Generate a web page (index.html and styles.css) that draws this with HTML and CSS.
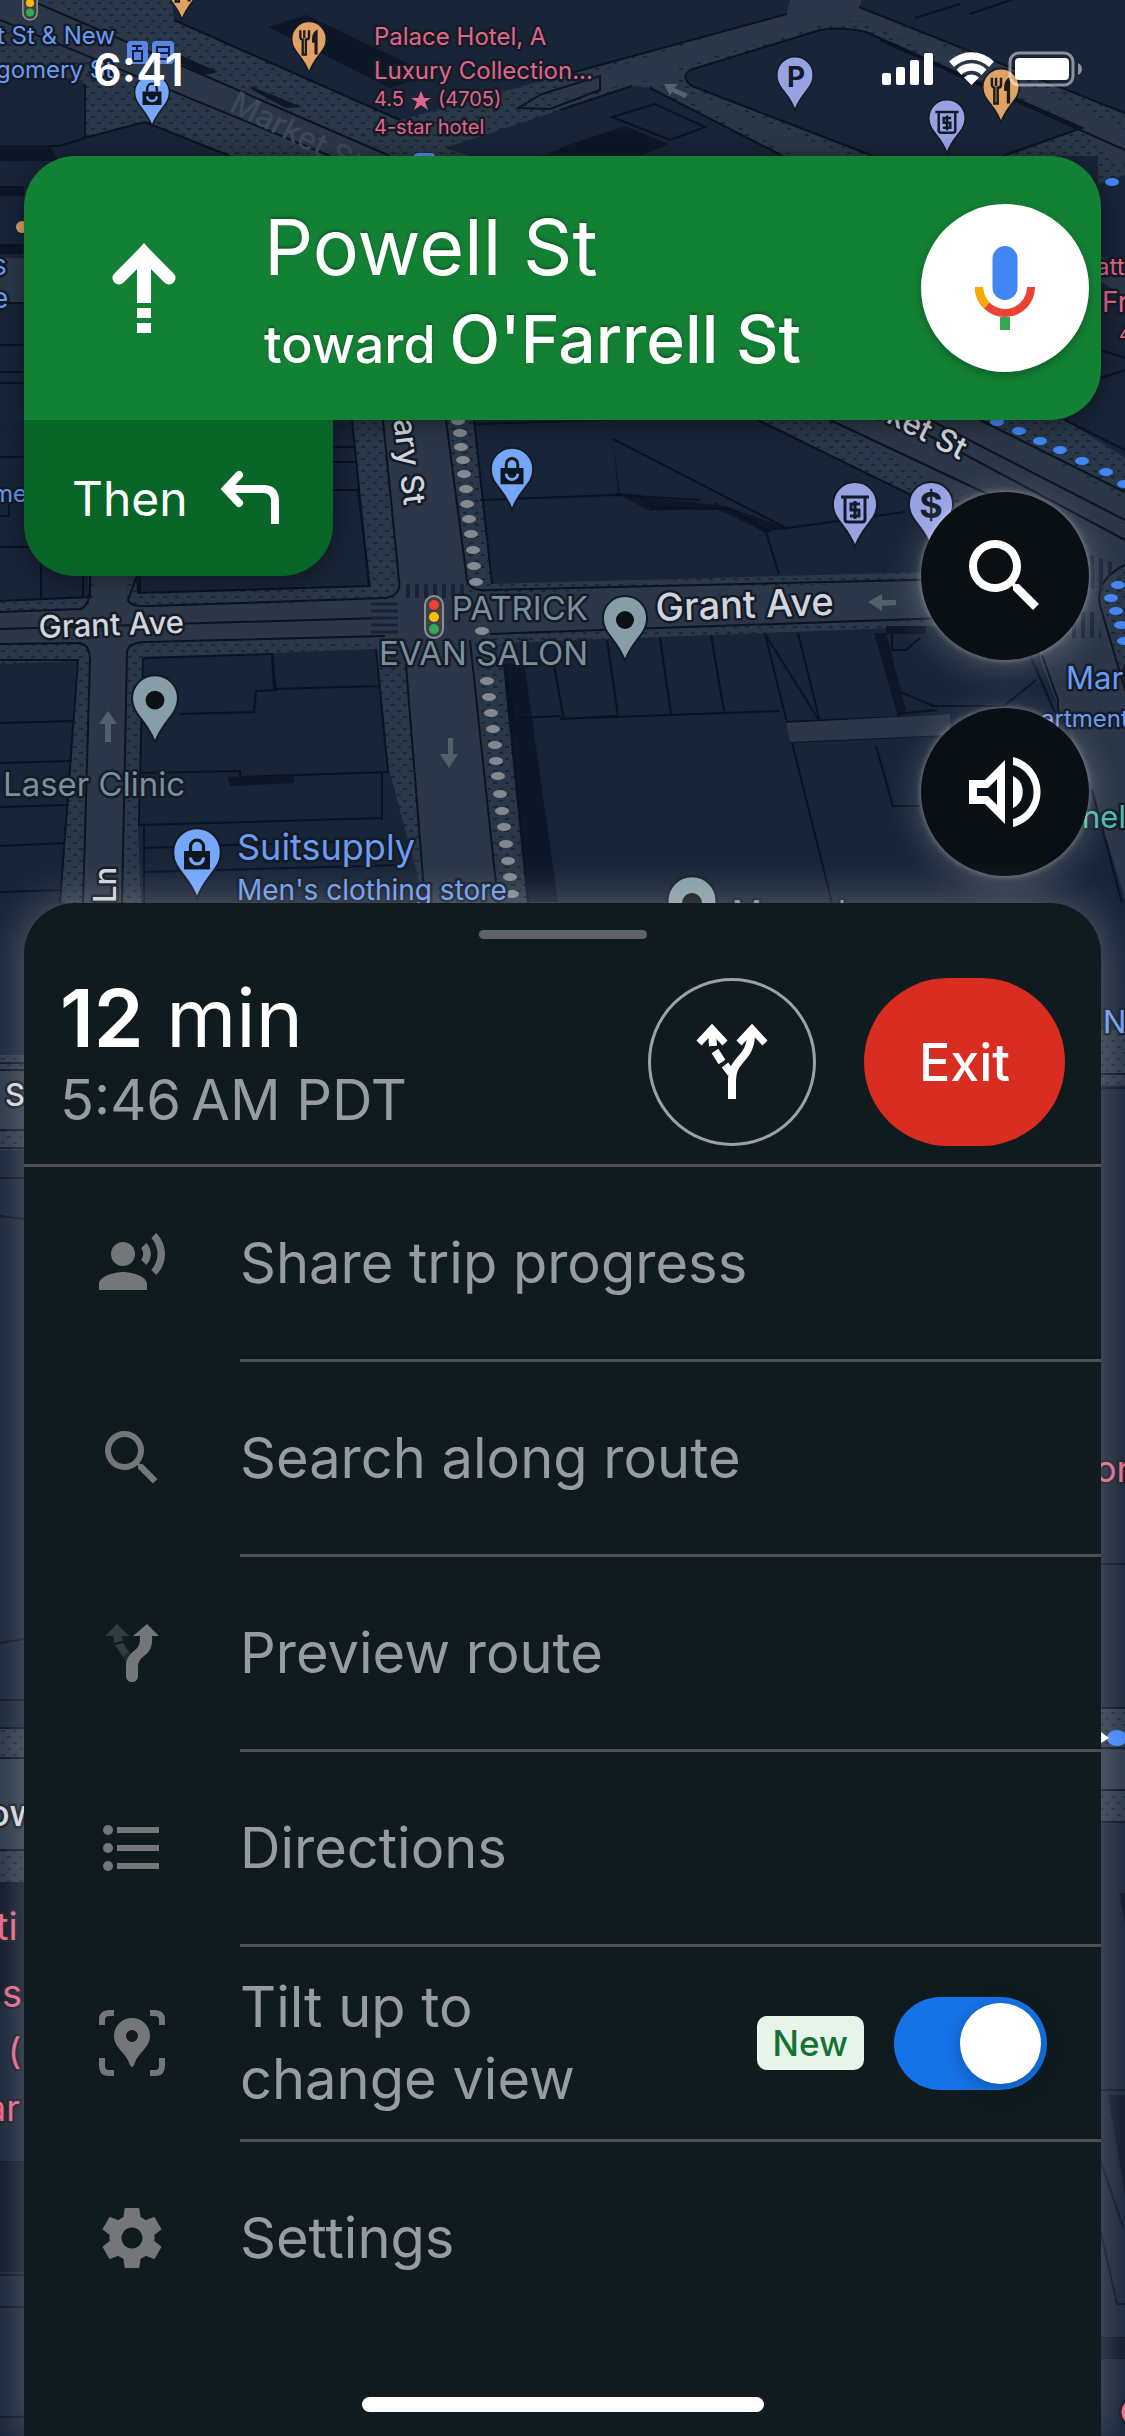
FILE: index.html
```html
<!DOCTYPE html>
<html lang="en">
<head>
  <meta charset="UTF-8" />
  <meta name="viewport" content="width=device-width, initial-scale=1.0"/>
  <title>Navigation</title>
  <link rel="stylesheet" href="styles.css">
</head>
<body>

  <!-- MAP -->
  <svg class="map" viewBox="0 0 1125 2436" preserveAspectRatio="xMidYMin slice" aria-hidden="true">
    <defs>
      <pattern id="walk" width="12" height="12" patternUnits="userSpaceOnUse">
        <rect width="12" height="12" fill="#2a3748"/>
        <path d="M1 3h4M7 9h4" stroke="#1a2638" stroke-width="2"/>
      </pattern>
      <pattern id="stripes" width="7" height="7" patternUnits="userSpaceOnUse">
        <path d="M0 2h7" stroke="#172335" stroke-width="3"/>
      </pattern>
      <pattern id="stripesV" width="9" height="9" patternUnits="userSpaceOnUse">
        <path d="M3 0v9" stroke="#172335" stroke-width="4"/>
      </pattern>
      <marker id="greyDot" markerUnits="userSpaceOnUse" markerWidth="16" markerHeight="10" refX="8" refY="5">
        <ellipse cx="8" cy="5" rx="7" ry="4" fill="#84888f"/>
      </marker>
      <marker id="blueDot" markerUnits="userSpaceOnUse" markerWidth="16" markerHeight="10" refX="8" refY="5">
        <ellipse cx="8" cy="5" rx="7" ry="4" fill="#4285f4"/>
      </marker>
      <symbol id="pin" viewBox="0 0 48 70">
        <path d="M24 2a22 22 0 0 1 22 23c0 15-15 21-22 42c-7-21-22-27-22-42a22 22 0 0 1 22-23z" fill="currentColor" stroke="#141a24" stroke-width="2"/>
      </symbol>
      <symbol id="bag" viewBox="0 0 48 70">
        <use href="#pin" width="48" height="70"/>
        <path d="M12 23h24v17H12z" fill="#10161f"/>
        <path d="M18 23v-4a6 6 0 0 1 12 0v4" fill="none" stroke="#10161f" stroke-width="3"/>
        <path d="M18 29a6 6 0 0 0 12 0" fill="none" stroke="currentColor" stroke-width="3"/>
      </symbol>
      <symbol id="food" viewBox="0 0 48 70">
        <use href="#pin" width="48" height="70"/>
        <path d="M13 13v8c0 3 2 4 3 4v19h4V25c2 0 4-1 4-4v-8M18 13v10" fill="none" stroke="#1c1a1a" stroke-width="3"/>
        <path d="M35 12c-5 2-8 7-7 17h3v15h4z" fill="#1c1a1a"/>
      </symbol>
      <symbol id="atm" viewBox="0 0 48 70">
        <use href="#pin" width="48" height="70"/>
        <path d="M10 17h28M14 17v22q0 3 3 3h14q3 0 3-3V17M29 24h-9v6h8v6h-9M24 21v18" fill="none" stroke="#141a28" stroke-width="3"/>
      </symbol>
      <symbol id="dot" viewBox="0 0 48 70">
        <use href="#pin" width="48" height="70"/>
        <circle cx="24" cy="26" r="9" fill="#0e1216"/>
      </symbol>
      <symbol id="light" viewBox="0 0 20 44">
        <rect x="1" y="1" width="18" height="42" rx="9" fill="#3e4146" stroke="#8d9094" stroke-width="2"/>
        <circle cx="10" cy="10" r="5" fill="#ea4335"/>
        <circle cx="10" cy="22" r="5" fill="#fbbc04"/>
        <circle cx="10" cy="34" r="5" fill="#34a853"/>
      </symbol>
    </defs>

    <rect width="1125" height="2436" fill="#182438"/>

    <!-- Market St, top -->
    <path class="walk" d="M0 0H172L174 20L400 120L560 76L787 14L790 0H862L859 7L1125 113V175L1098 184V156H1003L1082 128L866 32Q840 26 820 30L690 70Q680 78 692 86L873 156H783L650 88L632 86L560 110L445 148L470 156H230L145 122L84 138L85 84L70 78L0 78Z"/>
    <path class="road" d="M80 60L0 20V0H40L395 156H315L120 70ZM787 14L790 0H862L859 7L1125 130V165L1082 132L1070 120L866 22Q840 18 800 32L680 66Q672 78 686 92L850 156H795L650 80L560 98V84Z"/>
    <path class="line" d="M174 20L400 120M560 76L787 14M0 20L330 156M30 0L390 156M85 84V138L60 146H0M84 138L145 122L230 156M859 7L1125 113M690 70L820 30Q840 26 866 32L1082 128L1003 156M690 70Q680 78 692 86L873 156M650 88L783 156M560 110L632 86M880 40L1125 150M915 18L960 4M970 14L1040 -10M612 117L655 104L705 127L670 140L640 128Z"/>
    <path class="deep" d="M268 27L306 15L430 74L390 88ZM560 148L625 126L668 144L640 156H560ZM540 156L600 136V156ZM180 55l38 17l-14 3-36-18zM250 86l52 21-16 1-34-18z"/>
    <path d="M518 108l24-14 58-18v14l-50 19z" fill="none" stroke="#0c1422" stroke-width="2"/>
    <path d="M664 84l14 0-4 4 14 6-3 4-13-6-2 4z" fill="#566270"/>

    <!-- left edge by the banner -->
    <path class="road" d="M0 258h24v45H0z"/>
    <path class="deep" d="M0 145h50l8 16H0zM0 188h24v8H0zM0 244h24v10H0z"/>
    <path class="line" d="M0 187h24M0 246h24M0 303h24M0 345h24M0 372h24M0 383h24M0 457h24M0 547h40M9 505v11H0M41 547v50"/>
    <path class="road" d="M1101 256l24 14v26l-24-14z"/>
    <path class="line" d="M1101 350l24 8M1101 378l24-8"/>

    <!-- Grant Ave, Geary St and the alley -->
    <path class="walk" d="M0 601L90 598L88 576H137L138 593L369 586L352 420H474L492 584L1000 570V624L502 643L528 903H60L78 661L0 664Z"/>
    <path class="block" d="M143 658L376 649L389 770L425 903H141L138 825Z"/>
    <path class="road" d="M0 612L400 600L383 420H446L467 594L1000 580V618L474 634L498 903H425L404 640L129 643L122 903H83L90 644L0 642ZM94 576h32l-1 36H92Z"/>
    <path class="line" d="M0 612L80 609Q92 606 90 576M137 576L128 600Q130 607 150 606L385 598Q402 595 399 580L383 420M446 420L467 580Q470 592 490 590L1000 578M0 644L80 643Q90 645 90 660L83 903M122 903L127 652Q128 643 145 642L385 636M404 640L425 903M470 640L498 903M490 634L1000 616M0 629L380 618M0 601L90 597V576M137 576L138 593L369 586L352 420"/>
    <path d="M371 602h27v32h-27z" fill="url(#stripes)"/>
    <path d="M402 584h62v14h-62z" fill="url(#stripesV)"/>
    <path class="line" d="M143 658L272 654L274 689L379 686M143 658L139 825L382 818M272 654L276 690L256 691L254 712L180 714M376 649L388 772L240 777V771L140 773M382 772V820M144 825V903M144 848L385 840M144 872L400 865M0 660L78 660L60 903M0 723L75 721M0 763L72 761M0 807L69 805M0 846L65 843M0 892L62 890M333 447h22M333 462h22M333 490h25l12 97M140 576v18M83 576v20"/>
    <path class="deep" d="M228 777l66-2v8l-64 3zM504 664l20-2 34 240h-30zM519 720l11-1 7 50h-10zM527 806h12l4 40h-8z"/>
    <path class="line" d="M504 664L528 903M504 664L514 718L561 716M553 660L564 720M506 668L512 720M474 420L492 584M474 424L610 420M480 500L616 495L700 500M560 719L780 711M607 640L618 716M660 638L671 714M711 635L724 711M765 634L820 722M798 633L820 722L900 718M615 716L562 719M765 634L832 903M790 742L945 735M876 746L893 806L920 806M786 722L945 715M714 503L766 532L779 574M780 529L905 512"/>
    <path class="deep" d="M613 439L620 494L725 506L786 528L766 532L714 508L650 511L618 494ZM874 633l12 0 20 78-8 6zM886 626h40v8h-40z"/>
    <path class="line" d="M613 439L786 528M616 494L640 496L655 508L730 509L770 532M892 634V650h14l14-12M900 692l34 14 70 0 32-26M897 714l40-4"/>
    <path class="road" d="M786 723L950 714V735L790 742Z"/>

    <!-- Market St, lower -->
    <path class="walk" d="M758 420H1065L1125 458V690L1095 600L1040 540L950 512Z"/>
    <path class="road" d="M830 420H980L1125 500V560L1100 590L1125 690V900L1092 790L1040 660V540Z"/>
    <path class="walk" d="M1125 560L1100 590L1125 680Z"/>
    <path class="line" d="M758 420L945 512M830 420L1000 500M900 420L1125 540M930 420L1125 520M980 420L1125 492M1065 420L1125 450M1125 565Q1095 580 1100 605L1125 690M1030 655L1058 720M1042 655L1058 700V718M1092 790L1122 903"/>
    <path d="M1085 553l30 10-12 28-16-4zM1072 612h22l8 26h-36z" fill="url(#stripesV)"/>
    <polyline class="grey-dots" points="458,410 458,421 460,433 461,447 463,460 464,474 466,489 467,504 469,519 471,534 473,550 474,566 476,582 482,631 487,681 489,697 491,713 493,729 495,745 496,761 498,776 500,794 502,811 504,827 506,844 508,861 510,877 512,894 514,912"/>
    <polyline class="blue-dots" points="1100,170 1112,182 1130,170"/>
    <polyline class="blue-dots" points="975,412 997,422 1019,431 1040,441 1060,450 1082,461 1106,472 1124,484 1118,585 1111,598 1116,611 1121,625 1124,641 1130,650"/>

    <!-- one way arrows -->
    <path d="M105 742v-18h-6l9-13 9 13h-6v18zM448 738v16h-8l9 14 9-14h-5v-16zM896 605v-5h-14v-6l-14 8 14 9v-5z" fill="#52606c"/>

    <!-- strips either side of the sheet -->
    <path class="walk" d="M0 1055h24v95H0zM0 1728h24v157H0zM1101 1030h24v55h-24zM1101 1708h24v114h-24z"/>
    <path class="road" d="M0 1068h24v60H0zM0 1758h24v92H0zM1101 1750h24v45h-24z"/>
    <path class="line" d="M0 1063h24M0 1070h24M0 1130h24M0 1148h24M0 1178h24M0 1216l24 3M0 1643l24-4M0 1700h24M0 1728h24M0 1758h24M0 1850h24M0 2162h24M0 2275h24M0 2307h24M0 2417h24M1101 1074h24M1101 1088h24M1101 1564h24M1101 1708h24M1101 1748h24M1101 1790h24M1101 1822h24M1101 2090h24M1101 2162l22 65M1101 2232l16 72 8 0M1101 2338h24M1101 2358h24"/>
    <path class="deep" d="M0 1882h24v120H0zM0 2162h24v110H0zM1119 1893h6v30zM1101 2338h24v20h-24zM1108 2095h17v100z"/>

    <!-- street names -->
    <g class="label street">
      <text class="faint" x="228" y="110" transform="rotate(27 228 110)" font-size="31">Market St</text>
      <text x="404" y="506" transform="rotate(83 404 506)" text-anchor="end" font-size="31">Geary St</text>
      <text x="39" y="638" transform="rotate(-2 39 638)" font-size="31">Grant Ave</text>
      <text x="656" y="621" transform="rotate(-2 656 621)" font-size="38">Grant Ave</text>
      <text x="960" y="460" transform="rotate(27 960 460)" text-anchor="end" font-size="31">Market St</text>
      <text x="116" y="903" transform="rotate(-90 116 903)" font-size="31">Ln</text>
      <text x="5" y="1106" font-size="31">S</text>
      <text x="-12" y="1826" font-size="36">ow</text>
    </g>
    <!-- places -->
    <g class="label blue">
      <text x="115" y="44" text-anchor="end" font-size="24">t St &amp; New</text>
      <text x="113" y="78" text-anchor="end" font-size="24">gomery St</text>
      <text x="-8" y="275" font-size="28">s</text>
      <text x="-8" y="308" font-size="28">e</text>
      <text x="-8" y="502" font-size="24">me</text>
      <text x="237" y="860" font-size="36">Suitsupply</text>
      <text x="237" y="900" font-size="28">Men's clothing store</text>
      <text x="1066" y="689" font-size="31">Market</text>
      <text x="1041" y="727" font-size="24">artment</text>
      <text x="1103" y="1033" font-size="31">N</text>
    </g>
    <g class="label pink">
      <text x="374" y="45" font-size="24">Palace Hotel, A</text>
      <text x="374" y="79" font-size="24">Luxury Collection...</text>
      <text x="374" y="106" font-size="20">4.5</text>
      <text x="438" y="106" font-size="20">(4705)</text>
      <text x="374" y="134" font-size="20">4-star hotel</text>
      <text x="1096" y="275" font-size="24">att</text>
      <text x="1102" y="312" font-size="28">Fr</text>
      <text x="1119" y="341" font-size="20">4</text>
      <text x="1095" y="1482" font-size="36">or</text>
      <text x="-4" y="1940" font-size="38">ti</text>
      <text x="2" y="2007" font-size="38">s</text>
      <text x="8" y="2064" font-size="36">(</text>
      <text x="-14" y="2121" font-size="36">ar</text>
    </g>
    <path d="M421 91l3 7 7 0-6 4 3 8-7-5-7 5 3-8-6-4 7 0z" fill="#e0668a"/>
    <g class="label grey">
      <text x="588" y="620" text-anchor="end" font-size="33">PATRICK</text>
      <text x="588" y="665" text-anchor="end" font-size="33">EVAN SALON</text>
      <text x="185" y="796" text-anchor="end" font-size="33">Laser Clinic</text>
      <text x="732" y="924" font-size="33">Manual</text>
    </g>
    <text class="label" x="1082" y="828" font-size="31" fill="#45bcae">nel</text>

    <!-- pins -->
    <g color="#e0a365">
      <use href="#food" x="163" y="-33" width="38" height="55"/>
      <use href="#food" x="290" y="20" width="38" height="55"/>
      <use href="#food" x="981" y="67" width="40" height="58"/>
      <circle cx="22" cy="227" r="6" fill="#e0a365"/>
    </g>
    <g color="#74a7fa">
      <use href="#bag" x="133" y="73" width="38" height="56"/>
      <use href="#bag" x="489" y="446" width="46" height="67"/>
      <use href="#bag" x="171" y="826" width="52" height="76"/>
      <ellipse cx="1117" cy="1738" rx="10" ry="8" fill="#4285f4"/>
      <path d="M1101 1732l8 6-8 5z" fill="#ffffff"/>
    </g>
    <g color="#97a2e3">
      <use href="#pin" x="775" y="55" width="40" height="58"/>
      <text x="796" y="87" text-anchor="middle" class="glyph" font-size="28">P</text>
      <use href="#atm" x="927" y="98" width="40" height="58"/>
      <use href="#atm" x="831" y="480" width="48" height="70"/>
      <use href="#pin" x="907" y="480" width="48" height="70"/>
      <text x="931" y="518" text-anchor="middle" class="glyph" font-size="36">$</text>
    </g>
    <g color="#879ea8">
      <use href="#dot" x="130" y="673" width="50" height="73"/>
      <use href="#dot" x="601" y="594" width="48" height="70"/>
      <use href="#dot" x="665" y="874" width="54" height="78"/>
    </g>
    <use href="#light" x="424" y="595" width="20" height="44"/>
    <use href="#light" x="22" y="-19" width="16" height="44"/>
    <g fill="#5b86e8">
      <rect x="127" y="41" width="21" height="23" rx="4"/>
      <rect x="152" y="41" width="22" height="23" rx="4"/>
      <rect x="414" y="153" width="21" height="23" rx="4"/>
    </g>
    <path d="M132 46h10M137 46v5M133 51h9v10h-9zM157 47h12v12h-12zM157 53h12" fill="none" stroke="#152038" stroke-width="2"/>
    <circle cx="1134" cy="2412" r="14" fill="#ea6c8c" stroke="#141a24" stroke-width="3"/>
  </svg>

  <div class="screen">

    <div class="status">
      <span class="time">6:41</span>
      <svg width="202" height="36" viewBox="0 0 202 36" fill="#fff" aria-hidden="true">
        <rect x="2" y="22" width="9" height="12" rx="2"/>
        <rect x="16" y="16" width="9" height="18" rx="2"/>
        <rect x="30" y="9" width="9" height="25" rx="2"/>
        <rect x="44" y="2" width="9" height="32" rx="2"/>
        <path d="M69 10.500a32 32 0 0 1 45 0l-5 5.500a25 25 0 0 0-35 0zM76.500 18.500a21 21 0 0 1 30 0l-5 5.500a14 14 0 0 0-20 0zM84 26.500a11 11 0 0 1 15 0l-7.500 7.500z"/>
        <rect x="130" y="2" width="63" height="32" rx="9" fill="none" stroke="#fff" stroke-opacity=".5" stroke-width="3"/>
        <rect x="135" y="7" width="54" height="22" rx="4"/>
        <path d="M198 12q4 2 4 6t-4 6z" opacity=".5"/>
      </svg>
    </div>

    <div class="banner">
      <svg class="straight" width="120" height="120" viewBox="0 0 120 120" aria-hidden="true">
        <path d="M35 50L60 25L85 50" fill="none" stroke="#fff" stroke-width="13" stroke-linecap="round"/>
        <path d="M60 15l12 14h-5v46H53V29h-5zM53 80h14v10H53zM53 95h14v10H53z" fill="#fff"/>
      </svg>
      <div class="street-names">
        <div class="next-street">Powell St</div>
        <div class="toward">toward <strong>O'Farrell St</strong></div>
      </div>
      <button class="round mic" aria-label="Voice search">
        <svg width="96" height="96" viewBox="0 0 96 96">
          <rect x="35.500" y="6" width="25" height="54" rx="12.500" fill="#4285f4"/>
          <path d="M22 47a26 26 0 0 0 52 0" fill="none" stroke="#ea4335" stroke-width="8"/>
          <path d="M22 47a26 26 0 0 0 8 18.500" fill="none" stroke="#f9ab00" stroke-width="8"/>
          <path d="M43 77h10v13H43z" fill="#34a853"/>
        </svg>
      </button>
    </div>

    <div class="below">
      <div class="then">
        <span>Then</span>
        <svg width="72" height="72" viewBox="0 0 72 72" fill="none" stroke="#fff" stroke-width="8" aria-hidden="true">
          <path d="M14 27H50q12 0 12 12v23"/>
          <path d="M26 13L13 27l13 14" stroke-linecap="round"/>
        </svg>
      </div>
      <div class="fabs">
        <button class="round fab" aria-label="Search">
          <svg width="96" height="96" viewBox="0 0 24 24" fill="#fff">
            <path d="M15.500 14h-.79l-.28-.27A6.471 6.471 0 0 0 16 9.500 6.500 6.500 0 1 0 9.500 16c1.610 0 3.090-.59 4.230-1.570l.27.28v.79l5 4.990L20.490 19l-4.990-5zm-6 0C7.010 14 5 11.990 5 9.500S7.010 5 9.500 5 14 7.010 14 9.500 11.990 14 9.500 14z"/>
          </svg>
        </button>
        <button class="round fab" aria-label="Sound">
          <svg width="96" height="96" viewBox="0 0 96 96" fill="#fff">
            <path fill-rule="evenodd" d="M12 36H28L48 16V80L28 60H12ZM20 44V52H31L40 61V35L31 44Z"/>
            <path d="M56 13a36 36 0 0 1 0 70v-8a28 28 0 0 0 0-54zM56 32a18 18 0 0 1 0 32z"/>
          </svg>
        </button>
      </div>
    </div>

    <div class="sheet">
      <div class="handle"></div>
      <div class="trip">
        <div class="eta">
          <div class="minutes"><strong>12</strong> min</div>
          <div class="arrival">5:46&thinsp;AM PDT</div>
        </div>
        <button class="round routes" aria-label="Alternate routes">
          <svg width="96" height="96" viewBox="0 0 96 96" fill="none" stroke="#fff" stroke-width="8">
            <path d="M67 20C67 46 48 44 48 66V85"/>
            <path d="M55 29L68 15L81 29M15 29L28 15L41 29" stroke-width="7"/>
            <path d="M28 18l1 14M31 37l7 11M41 51l6 8"/>
          </svg>
        </button>
        <button class="exit">Exit</button>
      </div>

      <ul class="menu">
        <li><button class="item">
          <svg viewBox="0 0 24 24"><circle cx="9" cy="9" r="4"/><path d="M9 15c-2.670 0-8 1.340-8 4v2h16v-2c0-2.660-5.330-4-8-4zm7.760-9.640l-1.680 1.690c.84 1.180.84 2.710 0 3.890l1.680 1.690c2.020-2.020 2.020-5.070 0-7.270zM20.070 2l-1.630 1.630c2.770 3.020 2.770 7.560 0 10.740L20.070 16c3.900-3.890 3.910-9.950 0-14z"/></svg>
          <span class="text">Share trip progress</span>
        </button></li>
        <li><button class="item">
          <svg viewBox="0 0 24 24"><path d="M15.500 14h-.79l-.28-.27A6.471 6.471 0 0 0 16 9.500 6.500 6.500 0 1 0 9.500 16c1.610 0 3.090-.59 4.230-1.570l.27.28v.79l5 4.990L20.490 19l-4.990-5zm-6 0C7.010 14 5 11.990 5 9.500S7.010 5 9.500 5 14 7.010 14 9.500 11.990 14 9.500 14z"/></svg>
          <span class="text">Search along route</span>
        </button></li>
        <li><button class="item">
          <svg viewBox="0 0 72 72">
            <path d="M21 7l12 12h-7l1 5-9 2-1-7H9zM19 28l8-2 6 9-6 5z" opacity=".35"/>
            <path d="M27 41l6-6 4 5-6 6z" opacity=".2"/>
            <path d="M51 7l12 12h-7c1 12-3 16-8 20-4 3-6 6-6 10v11q-1 5-6 5t-6-5V49c0-8 4-12 9-16 4-3 5-6 5-14h-7z"/>
          </svg>
          <span class="text">Preview route</span>
        </button></li>
        <li><button class="item">
          <svg viewBox="0 0 72 72"><circle cx="12" cy="18" r="5"/><circle cx="12" cy="36" r="5"/><circle cx="12" cy="54" r="5"/><path d="M21 15h42v6H21zM21 33h42v6H21zM21 51h42v6H21z"/></svg>
          <span class="text">Directions</span>
        </button></li>
        <li><label class="item">
          <svg viewBox="0 0 72 72">
            <path d="M6 18v-5q0-7 7-7h5M54 6h5q7 0 7 7v5M66 51v8q0 7-7 7h-5M18 66h-5q-7 0-7-7v-8" fill="none" stroke="#73777a" stroke-width="6"/>
            <path fill-rule="evenodd" d="M36 11a18 18 0 0 1 18 18c0 12-12 16-16 29q-2 4-4 0c-4-13-16-17-16-29a18 18 0 0 1 18-18zM36 23a6 6 0 1 0 0 12a6 6 0 0 0 0-12z"/>
          </svg>
          <span class="text">Tilt up to<br>change view</span>
          <span class="badge">New</span>
          <input class="switch" type="checkbox" checked>
        </label></li>
        <li><button class="item">
          <svg viewBox="0 0 24 24"><path d="M19.430 12.980c.04-.32.07-.64.07-.98s-.03-.66-.07-.98l2.110-1.650c.19-.15.24-.42.12-.64l-2-3.460c-.12-.22-.39-.3-.61-.22l-2.490 1c-.52-.4-1.080-.73-1.690-.98l-.38-2.650C14.460 2.180 14.250 2 14 2h-4c-.25 0-.46.18-.49.42l-.38 2.650c-.61.25-1.170.59-1.690.98l-2.490-1c-.23-.09-.49 0-.61.22l-2 3.460c-.13.22-.07.49.12.64l2.110 1.650c-.04.32-.07.65-.07.98s.03.66.07.98l-2.110 1.650c-.19.15-.24.42-.12.64l2 3.460c.12.22.39.3.61.22l2.490-1c.52.4 1.080.73 1.690.98l.38 2.650c.03.24.24.42.49.42h4c.25 0 .46-.18.49-.42l.38-2.650c.61-.25 1.170-.59 1.690-.98l2.490 1c.23.09.49 0 .61-.22l2-3.460c.12-.22.07-.49-.12-.64l-2.110-1.650zM12 15.500c-1.930 0-3.500-1.570-3.500-3.500s1.570-3.500 3.500-3.500 3.500 1.570 3.500 3.500-1.570 3.500-3.500 3.500z"/></svg>
          <span class="text">Settings</span>
        </button></li>
      </ul>
      <div class="home-bar"></div>
    </div>

  </div>

</body>
</html>
```
FILE: styles.css
```css
* {
  box-sizing: border-box;
}
body {
  margin: 0;
  background-color: #182438;
  font-family: Inter, "Liberation Sans", sans-serif;
  color: #ffffff;
}
button {
  border: none;
  padding: 0;
  font: inherit;
  color: inherit;
  background: none;
  cursor: pointer;
}
svg {
  display: block;
  flex: none;
}

/* map */
.map {
  position: absolute;
  top: 0;
  left: 0;
  width: 100%;
  height: 100%;
}
.map .walk {
  fill: url(#walk);
}
.map .road {
  fill: #2b3748;
}
.map .block {
  fill: #182438;
}
.map .deep {
  fill: #0d1728;
}
.map .line {
  fill: none;
  stroke: #0a1322;
  stroke-width: 2;
}
.map .grey-dots {
  fill: none;
  marker-mid: url(#greyDot);
}
.map .blue-dots {
  fill: none;
  marker-mid: url(#blueDot);
}
.label {
  stroke: #151b26;
  stroke-width: 5px;
  stroke-linejoin: round;
  paint-order: stroke;
}
.label.street {
  fill: #d0d4dc;
  font-weight: 500;
}
.label .faint {
  fill: #3d4958;
  stroke: none;
}
.label.blue {
  fill: #6b9bf2;
}
.label.pink {
  fill: #e0668a;
}
.label.grey {
  fill: #78909c;
}
.glyph {
  font-weight: 700;
  fill: #141a28;
}

/* screen */
.screen {
  position: relative;
  display: flex;
  flex-direction: column;
  min-height: 100vh;
}
.status {
  display: flex;
  justify-content: space-between;
  align-items: center;
  height: 138px;
  margin-bottom: 18px;
  padding: 0 43px 0 93px;
}
.time {
  font-size: 45px;
  font-weight: 600;
}

/* banner */
.banner {
  position: relative;
  display: flex;
  align-items: center;
  height: 264px;
  margin: 0 24px;
  padding: 0 12px 0 60px;
  border-radius: 51px 51px 51px 0;
  background-color: #138134;
  box-shadow: 0 3px 24px rgba(0, 0, 0, 0.4);
}
.street-names {
  flex: 1;
  margin-left: 60px;
  padding-top: 15px;
  line-height: 92px;
  text-shadow: 0 -2px 3px rgba(0, 0, 0, 0.3);
}
.next-street {
  font-size: 77px;
}
.toward {
  font-size: 52px;
  font-weight: 500;
}
.toward strong {
  font-size: 66px;
  font-weight: 500;
}
.round {
  display: flex;
  align-items: center;
  justify-content: center;
  width: 168px;
  height: 168px;
  border-radius: 50%;
}
.mic {
  background-color: #ffffff;
  box-shadow: 0 3px 9px rgba(0, 0, 0, 0.3);
}
.below {
  display: flex;
  justify-content: space-between;
  align-items: flex-start;
  margin: 0 36px 27px 24px;
}
.then {
  display: flex;
  align-items: center;
  justify-content: space-between;
  width: 309px;
  height: 156px;
  padding: 0 48px;
  border-radius: 0 0 51px 51px;
  background-color: #066527;
  box-shadow: 0 3px 24px rgba(0, 0, 0, 0.4);
  clip-path: inset(0 -60px -60px -60px);
  font-size: 48px;
}
.fabs {
  display: grid;
  gap: 48px;
  margin-top: 72px;
}
.fab {
  background-color: #0a0f13;
  box-shadow: 0 0 6px rgba(255, 255, 255, 0.4), 0 6px 36px rgba(255, 255, 255, 0.25);
}

/* bottom sheet */
.sheet {
  display: flex;
  flex-direction: column;
  flex: 1;
  margin: 0 24px;
  padding-top: 27px;
  border-radius: 51px 51px 0 0;
  background-color: #101b20;
  box-shadow: 0 0 45px rgba(255, 255, 255, 0.3);
}
.handle {
  align-self: center;
  width: 168px;
  height: 9px;
  border-radius: 5px;
  background-color: #5f6368;
}
.trip {
  display: flex;
  align-items: center;
  gap: 48px;
  padding: 39px 36px 18px;
  border-bottom: 3px solid #4d5154;
}
.eta {
  flex: 1;
  padding-bottom: 4px;
}
.minutes {
  font-size: 80px;
  line-height: 80px;
}
.minutes strong {
  font-weight: 600;
}
.arrival {
  font-size: 56px;
  line-height: 84px;
  color: #979ca4;
}
.routes {
  border: 3px solid #9aa0a6;
}
.exit {
  width: 201px;
  height: 168px;
  border-radius: 84px;
  background-color: #d92d21;
  font-size: 52px;
  font-weight: 500;
}
.menu {
  margin: 0;
  padding: 0;
  list-style: none;
}
.item {
  display: flex;
  align-items: center;
  width: 100%;
  height: 195px;
  padding: 0 0 3px 72px;
  color: #979ca4;
  font-size: 56px;
  line-height: 72px;
  text-align: left;
  cursor: pointer;
}
.item svg {
  width: 72px;
  height: 72px;
  margin-right: 72px;
  fill: #73777a;
}
.text {
  flex: 1;
}
.menu li:not(:last-child) .item {
  background: linear-gradient(#4d5154, #4d5154) 216px 100% / 100% 3px no-repeat;
}
.badge {
  padding: 0 16px;
  border-radius: 10px;
  background-color: #e6f4ea;
  color: #137333;
  font-size: 35px;
  font-weight: 500;
  line-height: 54px;
}
.switch {
  appearance: none;
  width: 153px;
  height: 93px;
  margin: 0 54px 0 30px;
  padding: 6px;
  border-radius: 47px;
  background-color: #5f6368;
  cursor: pointer;
}
.switch::before {
  content: "";
  display: block;
  width: 81px;
  height: 81px;
  border-radius: 50%;
  background-color: #ffffff;
  box-shadow: 0 4px 18px rgba(0, 0, 0, 0.25);
}
.switch:checked {
  background-color: #1573e8;
}
.switch:checked::before {
  margin-left: auto;
}
.home-bar {
  align-self: center;
  width: 402px;
  height: 15px;
  margin: auto 0 24px;
  border-radius: 8px;
  background-color: #ffffff;
}
```
